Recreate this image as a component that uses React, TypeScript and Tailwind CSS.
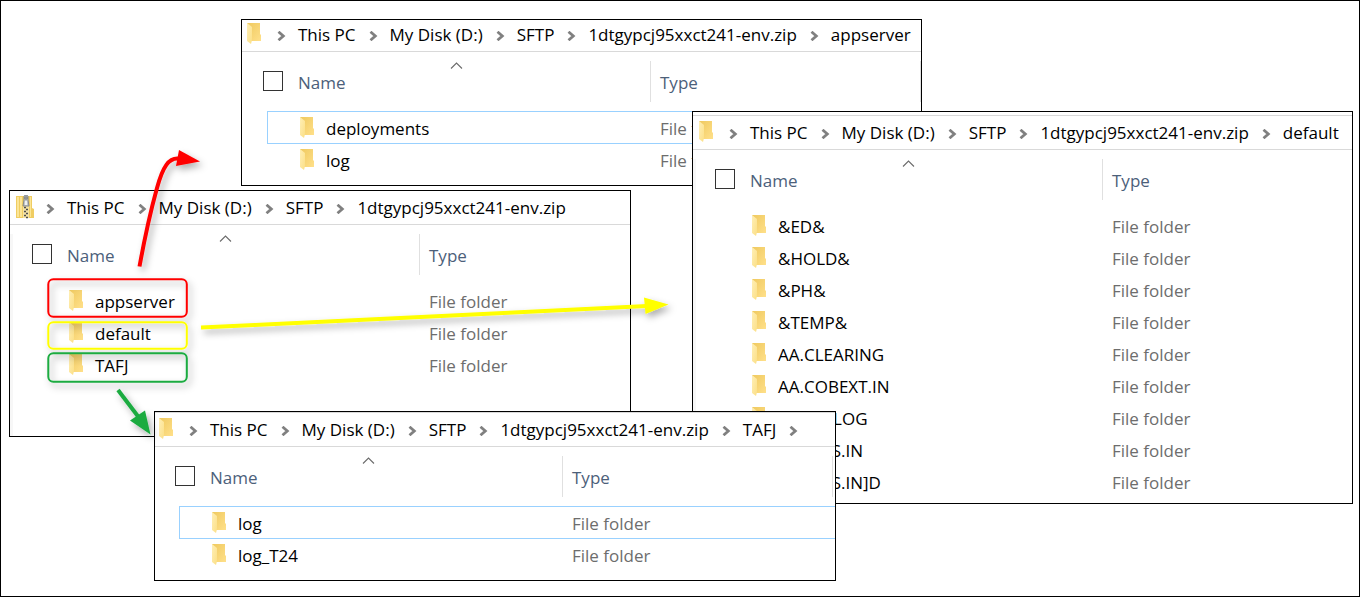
import React from "react";

type Entry = { name: string; selected?: boolean };

type WindowProps = {
  label: string;
  place: string;
  inset: string;
  bar: string;
  path: string[];
  zip?: boolean;
  trailing?: boolean;
  edge?: boolean;
  entries: Entry[];
};

function FolderIcon() {
  return (
    <svg className="block shrink-0" width="15" height="22" viewBox="0 0 15 22" aria-hidden="true">
      <defs>
        <linearGradient id="folderBack" x1="0" y1="0" x2="1" y2="1">
          <stop offset="0" stopColor="#efc95f" />
          <stop offset="1" stopColor="#ffe08a" />
        </linearGradient>
        <linearGradient id="folderFront" x1="0" y1="0" x2="1" y2="1">
          <stop offset="0" stopColor="#ffefb6" />
          <stop offset="1" stopColor="#fbdf86" />
        </linearGradient>
      </defs>
      <path d="M0 0H13V11L14 12V18H3Z" fill="url(#folderBack)" />
      <path d="M0 0L5 4V17L4 21L0 18Z" fill="url(#folderFront)" />
    </svg>
  );
}

function ZipIcon() {
  return (
    <svg className="block shrink-0" width="19" height="25" viewBox="0 0 19 25" aria-hidden="true">
      <path d="M0 1H16V13L18 14V23H0Z" fill="#f0cd62" />
      <path d="M1 2H3V22H1ZM4 2H6V22H4ZM14 2H15V22H14Z" fill="#fbe596" />
      <path d="M7 10H13V23H7Z" fill="#f5e3a4" />
      <path
        d="M8 12.500H10M10 14.500H12M8 16.500H10M10 18.500H12M8 20.500H10M10 22.500H12"
        stroke="#4d4d4d"
        strokeWidth="1.500"
      />
      <path d="M8 1Q10 -1 12 1L12 5L13 11H7L8 5Z" fill="#c3c6c7" stroke="#85898b" strokeWidth="1" />
      <path d="M9 6H11V10H9Z" fill="#eef0f0" />
      <path d="M9 2H11V4H9Z" fill="#f4f4f4" stroke="#6f7375" strokeWidth="1" />
    </svg>
  );
}

function Chevron() {
  return (
    <svg className="mx-3 block h-[10px] w-[10px] shrink-0" viewBox="0 0 10 10" aria-hidden="true">
      <path d="M2.500 0.800L7.300 5L2.500 9.200" fill="none" stroke="#808080" strokeWidth="2.800" />
    </svg>
  );
}

function ExplorerWindow({ label, place, inset, bar, path, zip, trailing, edge, entries }: WindowProps) {
  return (
    <section
      aria-label={label}
      className={`absolute flex flex-col overflow-hidden border border-black bg-white ${place}`}
    >
      <nav aria-label={`${label} path`} className={`border-b border-[#d9d9d9] ${bar} ${inset}`}>
        <ol className="flex h-[31px] items-center whitespace-nowrap text-black">
          <li className="w-[17px] shrink-0 pb-[3px]">{zip ? <ZipIcon /> : <FolderIcon />}</li>
          {path.map((part) => (
            <li key={part} className="flex items-center">
              <Chevron />
              <a href="#" className="block pb-0.5 leading-6">{part}</a>
            </li>
          ))}
          {trailing && (
            <li><Chevron /></li>
          )}
        </ol>
      </nav>
      <div className={`relative grow ${inset}`}>
        {edge && <div className="absolute bottom-0 left-0 top-[9px] w-[3px] bg-[#f7f7f7]" />}
        <table className="ml-[16px] w-[670px] table-fixed border-separate border-spacing-0 text-left">
          <colgroup>
            <col className="w-[4px]" />
            <col className="w-[31px]" />
            <col className="w-[353px]" />
            <col />
          </colgroup>
          <thead>
            <tr className="h-[59px] text-[#4c607a]">
              <th colSpan={2} className="p-0 align-top font-normal">
                <input
                  type="checkbox"
                  aria-label="Select all"
                  className="mt-[19px] block size-[20px] appearance-none border border-[#333333] bg-white"
                />
              </th>
              <th className="relative p-0 align-top font-normal">
                <svg
                  className="absolute left-[152px] top-[10px]"
                  width="13"
                  height="7"
                  viewBox="0 0 13 7"
                  aria-hidden="true"
                >
                  <path d="M1 6.500L6.500 1L12 6.500" fill="none" stroke="#6b6b6b" strokeWidth="1.100" />
                </svg>
                <div className="mt-[9px] flex h-[41px] items-start border-r border-[#e0e0e0] pt-[10px]">
                  <button type="button" className="leading-6">Name</button>
                </div>
              </th>
              <th className="p-0 align-top font-normal">
                <div className="mt-[9px] flex h-[41px] w-[270px] items-start border-r border-[#e0e0e0] pl-[9px] pt-[10px]">
                  <button type="button" className="leading-6">Type</button>
                </div>
              </th>
            </tr>
          </thead>
          <tbody>
            {entries.map(({ name, selected }) => (
              <tr key={name} className="h-[32px]">
                <td className="p-0" />
                <td
                  colSpan={2}
                  className={`p-0 ${selected ? "shadow-[inset_1px_1px_#99d1ff,0_1px_#99d1ff]" : ""}`}
                >
                  <div className="flex items-center gap-[11px] pl-[33px] pt-0.5 text-black">
                    <FolderIcon />
                    <span className="pt-0.5 leading-6">{name}</span>
                  </div>
                </td>
                <td
                  className={`p-0 text-[#6d6d6d] ${selected ? "shadow-[inset_0_1px_#99d1ff,0_1px_#99d1ff]" : ""}`}
                >
                  <div className="pl-[9px] pt-1 leading-6">File folder</div>
                </td>
              </tr>
            ))}
          </tbody>
        </table>
      </div>
    </section>
  );
}

function Annotations() {
  return (
    <svg className="pointer-events-none absolute -left-px -top-px h-[597px] w-[1360px]" viewBox="0 0 1360 597" aria-hidden="true">
      <defs>
        <filter id="shade" filterUnits="userSpaceOnUse" x="0" y="0" width="1360" height="597">
          <feDropShadow dx="3" dy="4" stdDeviation="3.500" floodColor="#000000" floodOpacity="0.32" />
        </filter>
      </defs>
      <g filter="url(#shade)" fill="none" strokeWidth="2">
        <rect x="48.300" y="279.300" width="138.500" height="37.500" rx="5" stroke="#ff0000" />
        <rect x="48.300" y="322.300" width="138.500" height="26.500" rx="5" stroke="#ffff00" />
        <rect x="48.300" y="353.300" width="138.500" height="28.500" rx="5" stroke="#1aab40" />
      </g>
      <g filter="url(#shade)">
        <path d="M139.500 266.500C147 225 152 206 157 188C163 166 169 158 178 158.500" fill="none" stroke="#ff0000" strokeWidth="4" />
        <path d="M179 150L200 161.500L176 166Z" fill="#ff0000" />
      </g>
      <g filter="url(#shade)">
        <path d="M201 327.500L647 306" fill="none" stroke="#ffff00" strokeWidth="4" />
        <path d="M644 297.500L668.500 304.500L645.500 314Z" fill="#ffff00" />
      </g>
      <g filter="url(#shade)">
        <path d="M118 390L138.500 417" fill="none" stroke="#1aab40" strokeWidth="4" />
        <path d="M130 420.500L145 410.500L150.500 434.500Z" fill="#1aab40" />
      </g>
    </svg>
  );
}

export default function App() {
  return (
    <main className="relative h-screen overflow-hidden border border-black bg-white font-['Open_Sans','Noto_Sans',sans-serif] text-[17px]">
      <ExplorerWindow
        label="appserver"
        place="left-[240px] top-[18px] h-[167px] w-[681px]"
        inset="pl-[5px]"
        bar=""
        path={["This PC", "My Disk (D:)", "SFTP", "1dtgypcj95xxct241-env.zip", "appserver"]}
        entries={[{ name: "deployments", selected: true }, { name: "log" }]}
      />
      <ExplorerWindow
        label="1dtgypcj95xxct241-env.zip"
        place="left-[8px] top-[189px] h-[247px] w-[622px]"
        inset="pl-[6px]"
        bar="pt-[2px]"
        zip
        edge
        path={["This PC", "My Disk (D:)", "SFTP", "1dtgypcj95xxct241-env.zip"]}
        entries={[{ name: "appserver" }, { name: "default" }, { name: "TAFJ" }]}
      />
      <ExplorerWindow
        label="default"
        place="left-[691px] top-[110px] h-[393px] w-[661px]"
        inset="pl-[6px]"
        bar="mt-[3px] border-t pt-[2px]"
        edge
        path={["This PC", "My Disk (D:)", "SFTP", "1dtgypcj95xxct241-env.zip", "default"]}
        entries={[
          { name: "&ED&" },
          { name: "&HOLD&" },
          { name: "&PH&" },
          { name: "&TEMP&" },
          { name: "AA.CLEARING" },
          { name: "AA.COBEXT.IN" },
          { name: "AA.DD.LOG" },
          { name: "AA.FEES.IN" },
          { name: "AA.FEES.IN]D" },
        ]}
      />
      <ExplorerWindow
        label="TAFJ"
        place="left-[153px] top-[410px] h-[170px] w-[682px]"
        inset="pl-[4px]"
        bar="border-t pt-[2px]"
        trailing
        path={["This PC", "My Disk (D:)", "SFTP", "1dtgypcj95xxct241-env.zip", "TAFJ"]}
        entries={[{ name: "log", selected: true }, { name: "log_T24" }]}
      />
      <Annotations />
    </main>
  );
}
